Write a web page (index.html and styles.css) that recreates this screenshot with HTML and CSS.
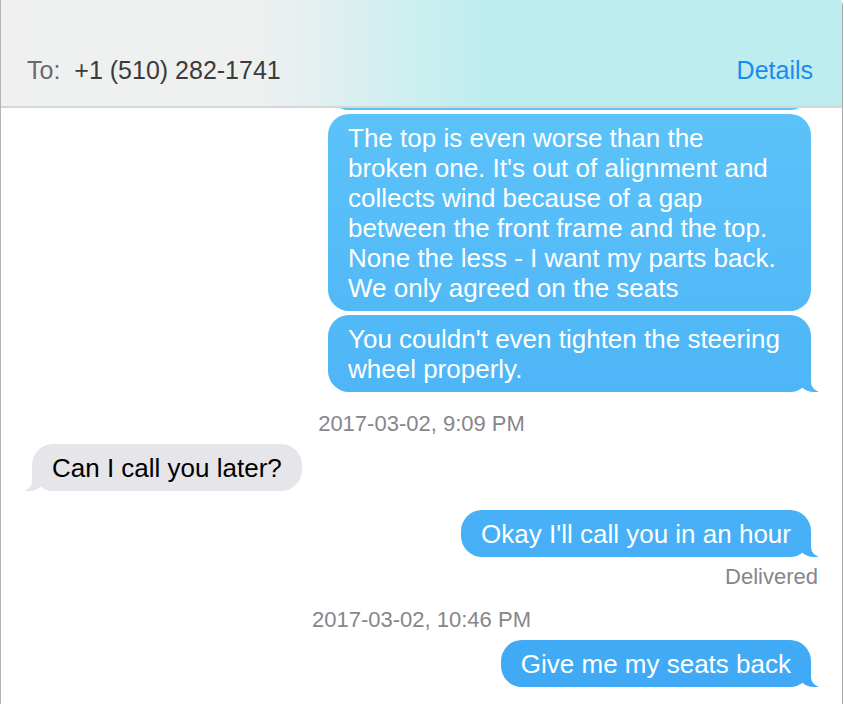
FILE: index.html
```html
<!DOCTYPE html>
<html lang="en">
<head>
  <meta charset="UTF-8">
  <meta name="viewport" content="width=device-width, initial-scale=1">
  <title>Messages - +1 (510) 282-1741</title>
  <link rel="stylesheet" href="styles.css">
</head>
<body>
  <div class="window">
    <header class="top-bar">
      <div class="recipient">
        <span class="to-label">To:</span>
        <span class="to-number">+1 (510) 282-1741</span>
      </div>
      <a class="details" href="#">Details</a>
    </header>

    <div class="thread">
      <div class="bubble out cut"></div>
      <div class="bubble out wide">
        The top is even worse than the<br>
        broken one. It's out of alignment and<br>
        collects wind because of a gap<br>
        between the front frame and the top.<br>
        None the less - I want my parts back.<br>
        We only agreed on the seats
      </div>
      <div class="bubble out wide tail">
        You couldn't even tighten the steering<br>
        wheel properly.
      </div>

      <div class="stamp">2017-03-02, 9:09 PM</div>

      <div class="bubble in tail">Can I call you later?</div>

      <div class="bubble out tail gap">Okay I'll call you in an hour</div>
      <div class="status">Delivered</div>

      <div class="stamp late">2017-03-02, 10:46 PM</div>

      <div class="bubble out tail">Give me my seats back</div>
    </div>
  </div>
</body>
</html>
```

FILE: styles.css
```css
body {
  margin: 0;
  padding: 0;
  background: #fff;
  font-family: "Liberation Sans", Arial, sans-serif;
}
.window {
  width: 841px;
  height: 704px;
  border-left: 1px solid #b4b4b4;
  border-right: 1px solid #a9a9a9;
  border-top-right-radius: 5px;
  overflow: hidden;
  display: flex;
  flex-direction: column;
}
.top-bar {
  height: 108px;
  flex: none;
  border-bottom: 2px solid #d2d7d7;
  background: linear-gradient(to right, #f0f0f0 0, #eef0f0 260px, #d2eff0 390px, #bdedef 490px, #bdedef 100%);
  display: flex;
  align-items: center;
  justify-content: space-between;
  padding: 34px 29px 0 26px;
  box-sizing: border-box;
  font-size: 25px;
}
.to-label {
  color: #6a6a6a;
  margin-right: 7px;
}
.to-number {
  color: #3b3b3b;
}
.details {
  color: #1a8bf0;
  text-decoration: none;
}
.thread {
  flex: 1;
  overflow: hidden;
  display: flex;
  flex-direction: column;
  padding: 0 31px;
}
.bubble {
  position: relative;
  max-width: 483px;
  box-sizing: border-box;
  padding: 9px 20px 8px;
  border-radius: 21px;
  font-size: 26px;
  line-height: 30px;
  white-space: nowrap;
}
.bubble.out {
  align-self: flex-end;
  color: #fff;
  background: linear-gradient(to bottom, #60c6fa 0, #5cc2f9 110px, #3fa8f5 704px) fixed;
  margin-top: 4px;
}
.bubble.in {
  align-self: flex-start;
  color: #000;
  background: #e5e5ea;
  margin-top: 8px;
}
.bubble.wide {
  width: 483px;
}
.bubble.cut {
  width: 483px;
  min-height: 47px;
  margin-top: -45px;
}
.bubble.gap {
  margin-top: 19px;
}
.stamp + .bubble {
  margin-top: 8px;
}

/* little tails on the last bubble of a group */
.bubble.tail::before,
.bubble.tail::after {
  content: "";
  position: absolute;
  bottom: 0;
  height: 20px;
}
.bubble.out.tail::before {
  right: -7px;
  width: 20px;
  background: linear-gradient(to bottom, #60c6fa 0, #5cc2f9 110px, #3fa8f5 704px) fixed;
  border-bottom-left-radius: 16px 14px;
}
.bubble.out.tail::after {
  right: -26px;
  width: 26px;
  background: #fff;
  border-bottom-left-radius: 10px;
}
.bubble.in.tail::before {
  left: -7px;
  width: 20px;
  background: #e5e5ea;
  border-bottom-right-radius: 16px 14px;
}
.bubble.in.tail::after {
  left: -26px;
  width: 26px;
  background: #fff;
  border-bottom-right-radius: 10px;
}
.stamp {
  align-self: center;
  color: #86868b;
  font-size: 22px;
  line-height: 24px;
  margin-top: 20px;
}
.stamp.late {
  margin-top: 20px;
}
.status {
  align-self: flex-end;
  color: #86868b;
  font-size: 22px;
  line-height: 22px;
  margin-top: 9px;
  margin-right: -7px;
}
```
